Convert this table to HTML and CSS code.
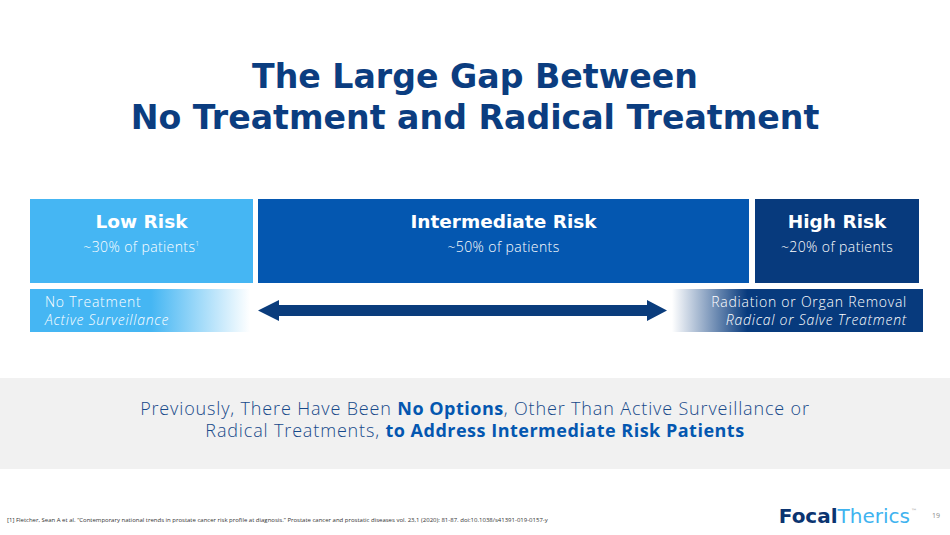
FILE: index.html
```html
<!DOCTYPE html>
<html>
<head>
<meta charset="utf-8">
<link rel="stylesheet" href="styles.css">
</head>
<body>
<div class="slide">
  <h1 class="title">The Large Gap Between<br>No Treatment and Radical Treatment</h1>

  <div class="risk-row">
    <div class="risk risk-low">
      <div class="risk-name">Low Risk</div>
      <div class="risk-pct">~30% of patients<sup>1</sup></div>
    </div>
    <div class="risk risk-mid">
      <div class="risk-name">Intermediate Risk</div>
      <div class="risk-pct">~50% of patients</div>
    </div>
    <div class="risk risk-high">
      <div class="risk-name">High Risk</div>
      <div class="risk-pct">~20% of patients</div>
    </div>
  </div>

  <div class="treat-row">
    <div class="treat treat-left">
      <div>No Treatment</div>
      <div class="it">Active Surveillance</div>
    </div>
    <svg class="arrow" width="409" height="43" viewBox="0 0 409 43">
      <polygon points="0,21.5 21,11 21,16 389,16 389,11 409,21.5 389,32 389,27 21,27 21,32" fill="#0a3c7c"/>
    </svg>
    <div class="treat treat-right">
      <div>Radiation or Organ Removal</div>
      <div class="it">Radical or Salve Treatment</div>
    </div>
  </div>

  <div class="band">
    <p>Previously, There Have Been <b>No Options</b>, Other Than Active Surveillance or<br>Radical Treatments, <b>to Address Intermediate Risk Patients</b></p>
  </div>

  <div class="footer">
    <div class="cite">[1] Fletcher, Sean A et al. “Contemporary national trends in prostate cancer risk profile at diagnosis.” Prostate cancer and prostatic diseases vol. 23,1 (2020): 81-87. doi:10.1038/s41391-019-0157-y</div>
    <div class="logo"><span class="focal">Focal</span><span class="therics">Therics</span><span class="tm">™</span></div>
    <div class="page">19</div>
  </div>
</div>
</body>
</html>
```

FILE: styles.css
```css
* { box-sizing: border-box; }
html, body { margin: 0; padding: 0; background: #fff; }
body { font-family: "DejaVu Sans", "Open Sans", sans-serif; }

.slide {
  width: 950px;
  height: 535px;
  display: flex;
  flex-direction: column;
  overflow: hidden;
}

.title {
  margin: 56px 0 0;
  text-align: center;
  font-family: "DejaVu Sans", sans-serif;
  font-weight: 700;
  font-size: 33.2px;
  line-height: 41px;
  color: #0b3d80;
  letter-spacing: 0;
}

.risk-row {
  margin-top: 61px;
  padding-left: 30px;
  display: grid;
  grid-template-columns: 223px 491px 165px;
  column-gap: 5px;
  height: 84px;
}
.risk-row .risk-high { margin-left: 1px; }

.risk {
  color: #fff;
  text-align: center;
  padding-top: 11px;
}
.risk-low { background: #45b6f3; }
.risk-mid { background: #0457b0; }
.risk-high { background: #073a7d; }

.risk-name {
  font-family: "DejaVu Sans", sans-serif;
  font-weight: 700;
  font-size: 18.5px;
  line-height: 24px;
}
.risk-pct {
  margin-top: 4px;
  font-family: "Open Sans", sans-serif;
  font-weight: 300;
  font-size: 14px;
  letter-spacing: 0.4px;
  line-height: 18px;
}
.risk-pct sup { font-size: 7px; vertical-align: 6px; line-height: 0; }

.treat-row {
  margin-top: 6px;
  padding-left: 30px;
  display: flex;
  height: 43px;
}
.treat {
  font-family: "Open Sans", sans-serif;
  font-weight: 300;
  font-size: 14px;
  letter-spacing: 0.75px;
  line-height: 18px;
  color: #fff;
  padding-top: 4px;
}
.treat .it { font-style: italic; }
.treat-left {
  width: 220px;
  padding-left: 15px;
  background: linear-gradient(to right, #45b6f3 0%, #45b6f3 55%, #ffffff 100%);
}
.arrow { margin-left: 8px; display: block; }
.treat-right {
  width: 251px;
  margin-left: 5px;
  text-align: right;
  padding-right: 16px;
  background: linear-gradient(to right, #ffffff 0%, #073a7d 30%, #073a7d 100%);
}

.band {
  margin-top: 46px;
  height: 91px;
  background: #f1f1f1;
  text-align: center;
}
.band p {
  margin: 0;
  padding-top: 19px;
  font-family: "Open Sans", sans-serif;
  font-weight: 300;
  font-size: 18px;
  letter-spacing: 0.85px;
  line-height: 22px;
  color: #17498a;
}
.band b { color: #0457b0; font-weight: 700; letter-spacing: 0.5px; }

.footer {
  flex: 1;
  display: flex;
  align-items: flex-end;
  padding: 0 0 7px 7px;
}
.cite {
  flex: 1;
  font-family: "Open Sans", sans-serif;
  font-size: 6px;
  color: #333;
  padding-bottom: 4px;
}
.logo {
  font-family: "DejaVu Sans", sans-serif;
  font-size: 20px;
  line-height: 24px;
  margin-right: 15px;
}
.focal { color: #0b3470; font-weight: 700; }
.therics { color: #3fb3ef; font-weight: 400; }
.tm { color: #999; font-size: 6px; vertical-align: 10px; margin-left: 1px; }
.page {
  font-family: "Open Sans", sans-serif;
  font-size: 7px;
  color: #888;
  width: 18px;
  padding-bottom: 8px;
}
```
